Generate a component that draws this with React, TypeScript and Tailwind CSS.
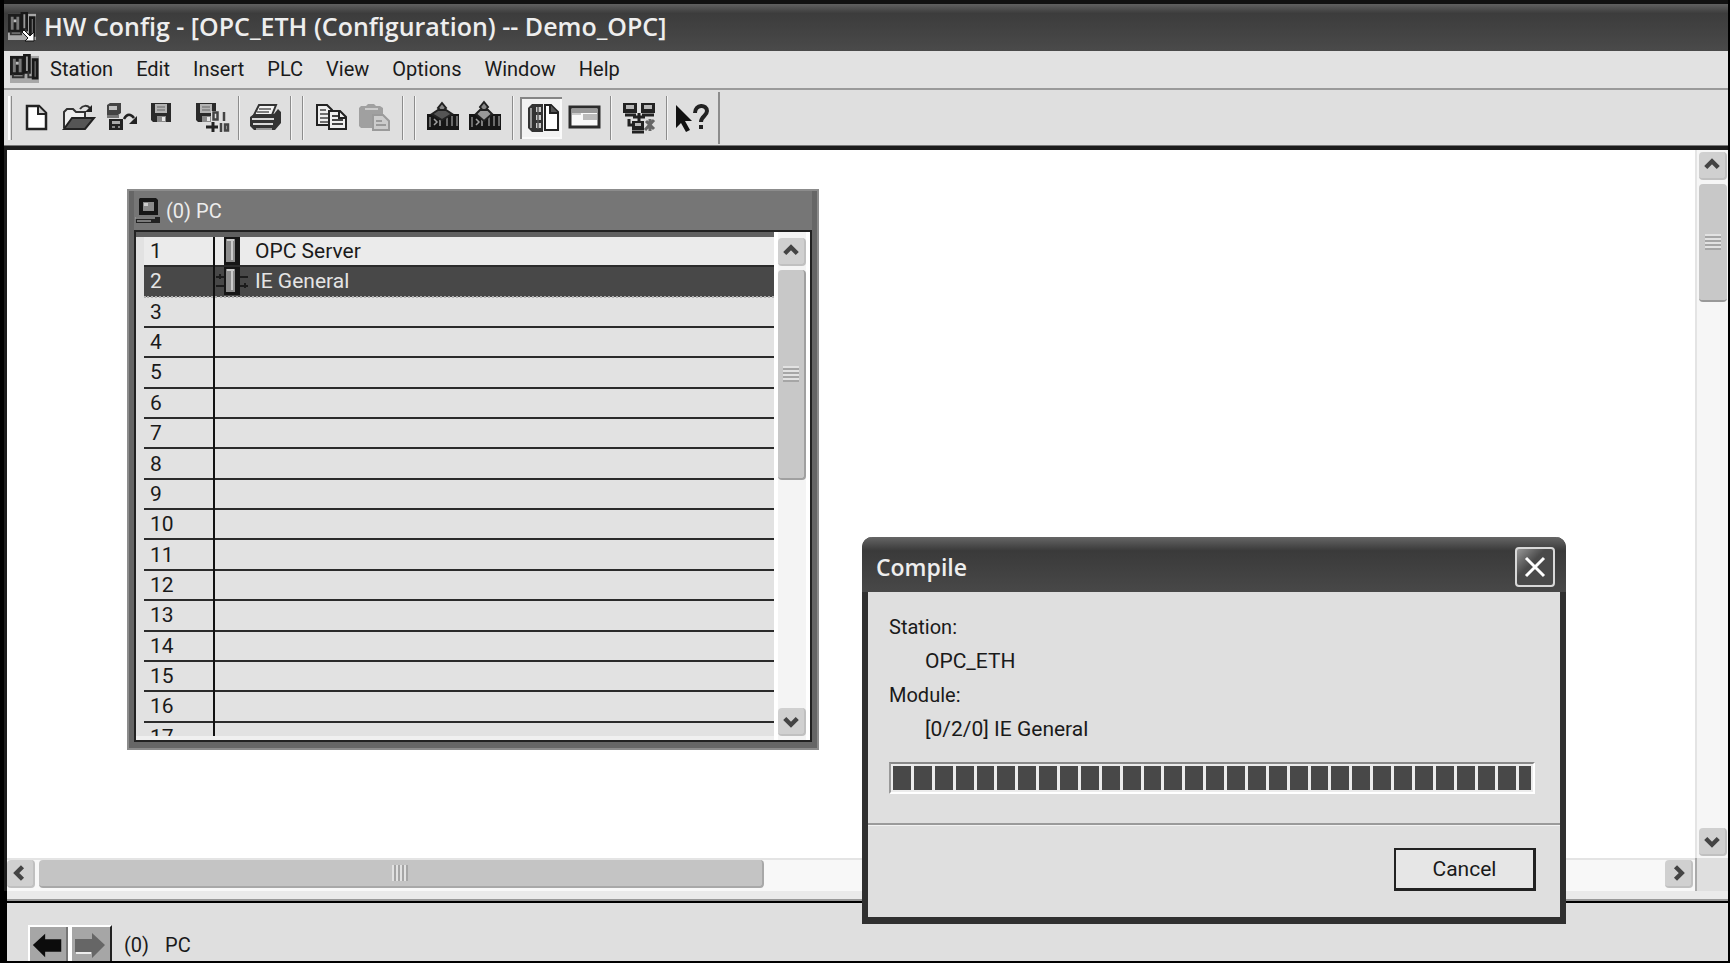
import type { ReactNode } from "react";
import { clsx } from "clsx";

const menus = ["Station", "Edit", "Insert", "PLC", "View", "Options", "Window", "Help"];

const slots: Record<number, string> = { 1: "OPC Server", 2: "IE General" };

const rows = Array.from({ length: 17 }, (_, i) => i + 1);

const blocks = Array.from({ length: 30 }, (_, i) => i);

function Separator() {
  return <div className="h-11 w-0.5 border-l border-[#8c8c8c] bg-[#f4f4f4]" />;
}

interface ToolButtonProps {
  label: string;
  pressed?: boolean;
  disabled?: boolean;
  children: ReactNode;
}

function ToolButton({ label, pressed, disabled, children }: ToolButtonProps) {
  return (
    <button
      type="button"
      aria-label={label}
      disabled={disabled}
      className={clsx(
        "size-[42px] shrink-0",
        pressed && "bg-[#f2f2f2] shadow-[inset_2px_2px_0_#858585,inset_-2px_-2px_0_#fafafa]",
      )}
    >
      <svg viewBox="0 0 42 42" className="size-full" fill="none">
        {children}
      </svg>
    </button>
  );
}

function Floppy() {
  return (
    <>
      <path d="M0 0h20v19H2l-2-2z" fill="#2a2a2a" />
      <path d="M4 1h12v9H4z" fill="#b4b4b4" />
      <path d="M6 4h8M6 7h8" stroke="#666" />
      <path d="M6 13h9v6H6z" fill="#8a8a8a" />
      <path d="M11 14h3v4h-3z" fill="#e8e8e8" />
    </>
  );
}

function StationRack({ className }: { className?: string }) {
  return (
    <svg viewBox="0 0 30 30" className={className} fill="none">
      <path d="M0 2h30v28H0z" fill="#a8a8a8" />
      <path d="M0 2h15v20H0z" fill="#1c1c1c" />
      <path d="M3 5h3v14H3zM9 5h3v14H9z" fill="#777" />
      <path d="M6 8h3v3H6z" fill="#bbb" />
      <path d="M15 1h5v18h-5z" fill="#999" stroke="#181818" strokeWidth="3" />
      <path d="M24 6h4v19h-4z" fill="#888" stroke="#181818" strokeWidth="3" />
      <path d="M3 21v3h11v-3M19 18v6h4" stroke="#333" strokeWidth="2" />
    </svg>
  );
}

function RackModules() {
  return (
    <>
      <path d="M5 17h32v16H5z" fill="#161616" />
      <path d="M8 20v10M25 19v10M30 19v10M35 19v10" stroke="#858585" strokeWidth="1.5" />
      <path d="M12 22l3 3-3 3M18 23v6" stroke="#a0a0a0" strokeWidth="1.5" />
    </>
  );
}

function Toolbar() {
  return (
    <div className="flex h-14 items-center border-b border-[#777] pl-1">
      <div className="mr-1 h-11 w-1 border-l-2 border-r border-l-white border-r-[#8c8c8c]" />
      <div className="flex">
        <ToolButton label="New">
          <path d="M11 9h12l7 7v16H11z" fill="#fff" stroke="#222" strokeWidth="2.5" />
          <path d="M22 9v8h8" fill="#ccc" stroke="#222" strokeWidth="2" />
        </ToolButton>
        <ToolButton label="Open">
          <path d="M6 31V15l3-3h6l3 3h9v5" fill="#eee" stroke="#333" strokeWidth="2" />
          <path d="M6 32l8-11h22l-9 11z" fill="#555" stroke="#222" strokeWidth="2" />
          <path d="M22 12c3-4 7-4 10-1" stroke="#333" strokeWidth="2" />
          <path d="M34 8v7h-7z" fill="#222" />
        </ToolButton>
        <ToolButton label="Open online">
          <path d="M7 8l3-2h11v10l-3 2H7z" fill="#444" />
          <path d="M9 9h8v4H9z" fill="#c0c0c0" />
          <path d="M7 18h12v3H7z" fill="#777" />
          <path d="M9 22h14v11H9z" fill="#222" />
          <path d="M12 24h8v3h-8z" fill="#aaa" />
          <path d="M12 30h3M18 30h2" stroke="#888" strokeWidth="2" />
          <path d="M24 22c3-6 7-5 10-1" stroke="#222" strokeWidth="2.5" />
          <path d="M37 19v8h-8z" fill="#222" />
        </ToolButton>
        <ToolButton label="Save">
          <g transform="translate(9 6)">
            <Floppy />
          </g>
        </ToolButton>
      </div>
      <div className="ml-1.5 mr-1.5 flex">
        <ToolButton label="Save and compile">
          <g transform="translate(6 6)">
            <Floppy />
          </g>
          <path d="M21 14h18v22H21z" fill="#e0e0e0" />
          <path d="M23.5 15.5h4v7h-4zM34 15v9M31 35v-9M35 27.5h3v6h-3z" stroke="#444" strokeWidth="2.5" />
          <path d="M16 30h12M23 25v10" stroke="#222" strokeWidth="3" />
        </ToolButton>
      </div>
      <Separator />
      <div className="mx-1 flex">
        <ToolButton label="Print">
          <path d="M15 8h17l-4 10H10z" fill="#f4f4f4" stroke="#333" strokeWidth="2" />
          <path d="M15 12h12M13 15h12" stroke="#555" strokeWidth="1.5" />
          <path d="M6 20l4-3h20l4-5 3 3v11l-6 7H10l-4-4z" fill="#333" />
          <path d="M8 22h22M9 27h20" stroke="#d8d8d8" strokeWidth="2" />
          <path d="M12 32h16" stroke="#999" strokeWidth="2" />
        </ToolButton>
      </div>
      <div className="mr-1.5 flex gap-2.5">
        <Separator />
        <Separator />
      </div>
      <div className="mr-2 flex">
        <ToolButton label="Copy">
          <path d="M7 8h10l5 5v15H7z" fill="#eee" stroke="#222" strokeWidth="2" />
          <path d="M10 13h6M10 17h9M10 21h9M10 25h9" stroke="#444" strokeWidth="1.5" />
          <path d="M19 14h11l6 6v12H19z" fill="#eee" stroke="#222" strokeWidth="2" />
          <path d="M22 19h6M22 23h11M22 27h11" stroke="#444" strokeWidth="2" />
          <path d="M29 14v7h7" stroke="#222" strokeWidth="2" />
        </ToolButton>
        <ToolButton label="Paste" disabled>
          <path d="M7 11l2-2h5l2-2h6l2 2h4l3 2v8h-9v12H9l-2-2z" fill="#a0a0a0" />
          <path d="M13 12h13" stroke="#ccc" strokeWidth="2" />
          <path d="M21 18h10l6 6v9H21z" fill="#ccc" stroke="#9a9a9a" strokeWidth="2" />
          <path d="M24 24h6M24 28h10" stroke="#9a9a9a" strokeWidth="2" />
        </ToolButton>
      </div>
      <div className="mr-1.5 flex gap-2.5">
        <Separator />
        <Separator />
      </div>
      <div className="mr-1.5 flex">
        <ToolButton label="Download to module">
          <RackModules />
          <path d="M20 6l4 5-4 4-4-4z" fill="#888" stroke="#222" strokeWidth="2" />
          <path d="M10 17l6-4h8l6 4-10 6z" fill="#555" stroke="#222" strokeWidth="2" />
        </ToolButton>
        <ToolButton label="Upload from module">
          <RackModules />
          <path d="M20 5l4 5-4 5-4-5z" fill="#888" stroke="#222" strokeWidth="2" />
          <path d="M12 17l4-4h8l4 4-8 7z" fill="#999" stroke="#222" strokeWidth="2" />
        </ToolButton>
      </div>
      <Separator />
      <div className="mx-1.5 flex">
        <ToolButton label="Catalog" pressed>
          <path d="M8 11l4-4h11v28H12l-4-4z" fill="#333" />
          <path d="M11 11v20" stroke="#999" strokeWidth="2" />
          <path d="M16 10h5v5h-5zM16 18h5v5h-5zM16 26h5v5h-5z" fill="#ccc" />
          <path d="M18 10v22" stroke="#555" strokeWidth="1.5" />
          <path d="M25 8h6l7 7v18H25z" fill="#fff" stroke="#222" strokeWidth="2" />
          <path d="M30 8v8h8" fill="#555" stroke="#222" strokeWidth="2" />
        </ToolButton>
        <ToolButton label="Station view">
          <path d="M8 10h29v20H8z" fill="#fafafa" stroke="#2c2c2c" strokeWidth="3" />
          <path d="M10 12h25v4H10z" fill="#999" />
          <path d="M21 17h14v6H21z" fill="#bbb" />
          <path d="M10 17h9" stroke="#ccc" strokeWidth="2" />
        </ToolButton>
      </div>
      <Separator />
      <div className="mx-1.5 flex">
        <ToolButton label="Configure network">
          <path d="M5 6h14v10H5zM23 6h14v10H23zM14 24h12v9H14z" fill="#222" />
          <path d="M8 8h8v4H8zM26 8h8v4h-8zM17 26h6v3h-6z" fill="#b8b8b8" />
          <path d="M7 18h11M24 18h12M21 16v8M15 20h12" stroke="#222" strokeWidth="3" />
          <path d="M11 22v6h4M14 35h12" stroke="#222" strokeWidth="3" />
          <path d="M28 24l8 8M36 23l-9 10M32 22v12" stroke="#666" strokeWidth="3" />
        </ToolButton>
      </div>
      <Separator />
      <div className="mx-1 flex">
        <ToolButton label="Help">
          <path d="M4 8v23l5-5 5 9 4-2-5-9h7z" fill="#111" />
          <path d="M23 16c0-9 12-9 12-2 0 5-6 5-6 11" stroke="#222" strokeWidth="4" />
          <path d="M27 28h4v4h-4z" fill="#222" />
        </ToolButton>
      </div>
      <div className="h-13 w-0.5 bg-[#8c8c8c]" />
    </div>
  );
}

const arrows = {
  up: "M3 10l5-5 5 5",
  down: "M3 6l5 5 5-5",
  left: "M10 3L5 8l5 5",
  right: "M6 3l5 5-5 5",
};

function ScrollButton({ dir }: { dir: keyof typeof arrows }) {
  return (
    <button
      type="button"
      aria-label={`Scroll ${dir}`}
      className="flex size-7 shrink-0 items-center justify-center rounded-sm border-r-2 border-b-2 border-[#c0c0c0] bg-[#d0d0d0]"
    >
      <svg viewBox="0 0 16 16" className="size-5" fill="none" stroke="#444" strokeWidth="3.5">
        <path d={arrows[dir]} />
      </svg>
    </button>
  );
}

function GripLines() {
  return (
    <>
      {[0, 1, 2, 3].map((i) => (
        <span key={i} className="h-4 w-1 border-l-2 border-r-2 border-l-[#e2e2e2] border-r-[#a6a6a6]" />
      ))}
    </>
  );
}

function PcWindow() {
  return (
    <section className="absolute top-[39px] left-[120px] flex h-[561px] w-[692px] flex-col border-2 border-[#8c8c8c] bg-[#666] px-[5px] pb-1.5">
      <h2 className="flex h-[39px] items-center gap-1 bg-[#767676] text-[20px] leading-6 text-[#ececec]">
        <svg viewBox="0 0 28 28" className="size-7" fill="none">
          <path d="M6 1h16l2 2v15H5V2z" fill="#161616" />
          <path d="M9 5h11v9H9z" fill="#8a8a8a" />
          <path d="M10 6h4v3h-4z" fill="#ccc" />
          <path d="M2 20h24v6H2z" fill="#222" />
          <path d="M1 21h20M3 24h14" stroke="#999" strokeWidth="1.5" />
        </svg>
        (0) PC
      </h2>
      <div className="flex min-h-0 flex-1 border-2 border-[#222] bg-[#e2e2e2]">
        <div className="min-w-0 flex-1 overflow-hidden border-t-[5px] border-b-4 border-t-[#606060] border-b-[#f0f0f0] pl-2">
          <table className="h-[516px] w-full border-collapse text-[21px] leading-6">
            <tbody>
              {rows.map((n) => (
                <tr
                  key={n}
                  className={clsx(
                    "border-b-2 border-[#2b2b2b]",
                    n === 1 && "bg-[#ebebeb]",
                    n === 2 && "border-b-[#b0b0b0] border-dotted bg-[#484848] text-[#e4e4e4]",
                  )}
                >
                  <td className="w-[70px] border-r-2 border-solid border-[#111] py-0 pl-1.5">{n}</td>
                  <td className="py-0 pl-2">
                    {slots[n] && (
                      <div className="flex h-6 items-center gap-3.5">
                        <svg viewBox="0 0 18 28" className="h-7 w-[18px] overflow-visible" fill="none">
                          {n === 2 && (
                            <path d="M-7 10h32M-7 19h32M-3 7v5M22 16v5" stroke="#1c1c1c" strokeWidth="2" />
                          )}
                          <path d="M1 0h16v28H1z" fill="#161616" />
                          <path d="M3 2h9v23H3z" fill="#8c8c8c" />
                          <path d="M4 3h7M9 3v20" stroke="#ccc" strokeWidth="2" />
                        </svg>
                        {slots[n]}
                      </div>
                    )}
                  </td>
                </tr>
              ))}
            </tbody>
          </table>
        </div>
        <div className="flex w-9 flex-col items-center border-x-4 border-white bg-[#f4f4f4] pt-1.5 pb-1">
          <ScrollButton dir="up" />
          <div className="mt-1 flex h-[210px] w-7 flex-col items-center justify-center rounded-sm border-r-2 border-b-2 border-[#a0a0a0] bg-[#c8c8c8]">
            <div className="flex rotate-90">
              <GripLines />
            </div>
          </div>
          <div className="mt-auto">
            <ScrollButton dir="down" />
          </div>
        </div>
      </div>
    </section>
  );
}

function CompileDialog() {
  return (
    <div
      role="dialog"
      aria-labelledby="compile-title"
      className="absolute top-[537px] left-[858px] w-[704px] rounded-t-[10px] border-x-[6px] border-b-[7px] border-[#303030] bg-[#dfdfdf] text-[20px] leading-[34px] text-[#1a1a1a]"
    >
      <div className="-mx-1.5 flex h-[55px] items-center justify-between rounded-t-[10px] bg-linear-to-b from-[#666] via-[#3a3a3a] via-25% to-[#484848] pt-1 pr-[11px] pl-3.5">
        <h2 id="compile-title" className="font-['Open_Sans'] text-[23px] font-semibold text-[#eee]">
          Compile
        </h2>
        <button
          type="button"
          aria-label="Close"
          className="flex size-10 items-center justify-center rounded-sm border-2 border-[#d8d8d8] bg-linear-to-br from-[#999] to-[#4a4a4a] to-40%"
        >
          <svg viewBox="0 0 24 24" className="size-6" stroke="#fff" strokeWidth="3">
            <path d="M3 3l18 18M21 3L3 21" />
          </svg>
        </button>
      </div>
      <div className="border-b-2 border-[#9a9a9a] px-[21px] pt-[18px] pb-[29px]">
        <dl>
          <dt>Station:</dt>
          <dd className="pl-9 text-[21px]">OPC_ETH</dd>
          <dt>Module:</dt>
          <dd className="pl-9 text-[21px]">[0/2/0] IE General</dd>
        </dl>
        <div
          role="progressbar"
          aria-label="Compile progress"
          className="mt-4 mr-1 flex h-8 gap-[3px] border-2 border-t-[#888] border-r-white border-b-white border-l-[#999] bg-[#ececec] p-0.5"
        >
          {blocks.map((i) => (
            <span key={i} className="flex-[18] bg-[#484848]" />
          ))}
          <span className="flex-[12] bg-[#484848]" />
        </div>
      </div>
      <div className="flex justify-end border-t border-[#f2f2f2] px-6 pt-[22px] pb-[26px]">
        <button
          type="button"
          className="h-[43px] w-[142px] border-2 border-r-[3px] border-b-[3px] border-[#222] bg-[#e6e6e6] text-[21px] leading-6"
        >
          Cancel
        </button>
      </div>
    </div>
  );
}

export default function App() {
  return (
    <div className="relative flex h-screen flex-col overflow-hidden border-r-2 border-b-2 border-l-4 border-black bg-[#dfdfdf] font-[Roboto,sans-serif] text-[20px] leading-6 text-[#1a1a1a]">
      <header className="flex h-[51px] shrink-0 items-center gap-2 border-t-4 border-[#111] bg-linear-to-b from-[#606060] via-[#3c3c3c] via-20% to-[#4a4a4a] pb-1 pl-1">
        <span className="relative size-7">
          <StationRack className="size-7" />
          <svg viewBox="0 0 16 16" className="absolute right-0 -bottom-1 size-4">
            <path d="M14 4v9H5l3-3-6-6 2-2 6 6z" fill="#fff" stroke="#111" />
          </svg>
        </span>
        <h1 className="font-['Open_Sans'] text-[25px] leading-8 font-semibold text-[#eee]">
          HW Config - [OPC_ETH (Configuration) -- Demo_OPC]
        </h1>
      </header>

      <nav className="flex h-[39px] shrink-0 items-center gap-[23px] border-b-2 border-[#9a9a9a] bg-[#e2e2e2] pb-0.5 pl-1.5">
        <StationRack className="-mr-3 size-[29px]" />
        {menus.map((item) => (
          <button key={item} type="button">
            {item}
          </button>
        ))}
      </nav>

      <Toolbar />

      <main className="flex min-h-0 flex-1 flex-col border-t-4 border-l-[3px] border-[#1c1c1c] bg-white">
        <div className="flex min-h-0 flex-1">
          <div className="relative min-w-0 flex-1">
            <PcWindow />
          </div>
          <div className="flex w-[33px] flex-col items-center border-l-2 border-[#e4e4e4] bg-[#f6f6f6] pt-0.5 pb-0.5">
            <ScrollButton dir="up" />
            <div className="mt-1 flex h-[118px] w-7 items-center justify-center rounded-sm border-b-2 border-[#999] bg-[#c8c8c8]">
              <div className="flex rotate-90">
                <GripLines />
              </div>
            </div>
            <div className="mt-auto">
              <ScrollButton dir="down" />
            </div>
          </div>
        </div>
        <div className="flex h-[33px] bg-[#dfdfdf]">
          <div className="flex min-w-0 flex-1 items-start border-t-2 border-[#e4e4e4] bg-[#f8f8f8] pr-0.5">
            <ScrollButton dir="left" />
            <div className="ml-1 flex h-7 w-[43%] items-center justify-center rounded-sm border-r-2 border-b-2 border-[#a8a8a8] bg-[#c4c4c4]">
              <GripLines />
            </div>
            <div className="ml-auto">
              <ScrollButton dir="right" />
            </div>
          </div>
          <div className="w-[33px] border-l-2 border-[#aaa]" />
        </div>
      </main>

      <footer className="shrink-0 border-l-[3px] border-black">
        <div className="h-3 border-b-2 border-black bg-[#eaeaea] shadow-[inset_0_-2px_0_#999]" />
        <div className="flex items-end pt-[22px] pl-[21px]">
          <div className="flex h-9 gap-1 border-t-2 border-r-2 border-l-2 border-t-white border-r-[#222] border-l-white bg-white">
            <button type="button" aria-label="Back" className="w-[38px] border-r-2 border-[#777] bg-[#a6a6a6]">
              <svg viewBox="0 0 38 34" className="w-full">
                <path d="M3 18L16 6v6h17v13H16v6z" fill="#0c0c0c" />
              </svg>
            </button>
            <button type="button" aria-label="Forward" className="w-[38px] bg-[#a6a6a6]" disabled>
              <svg viewBox="0 0 38 34" className="w-full">
                <path d="M33 18L20 6v6H3v13h17v6z" fill="#666" />
                <path d="M4 26h15" stroke="#eee" strokeWidth="2" />
              </svg>
            </button>
          </div>
          <p className="flex gap-4 pb-1 pl-3">
            <span>(0)</span>
            <span>PC</span>
          </p>
        </div>
      </footer>

      <CompileDialog />
    </div>
  );
}
